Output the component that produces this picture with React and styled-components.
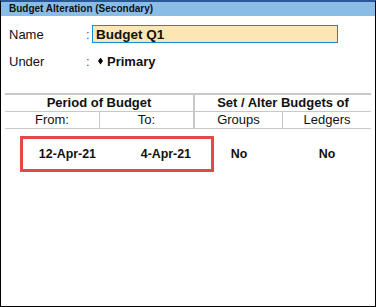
import React from "react";
import styled, { createGlobalStyle } from "styled-components";

const GlobalStyle = createGlobalStyle`
  html, body {
    margin: 0;
    padding: 0;
    background: #ffffff;
  }
  body {
    font-family: "Liberation Sans", Arial, sans-serif;
    color: #000;
  }
`;

const Frame = styled.div`
  box-sizing: border-box;
  width: 376px;
  height: 307px;
  border: 1px solid #000;
  border-top: 2px solid #2b5797;
  display: flex;
  flex-direction: column;
`;

const TitleBar = styled.div`
  height: 14px;
  line-height: 14px;
  background: #8abde6;
  padding-left: 8px;
  font-size: 10px;
  font-weight: bold;
  color: #111;
`;

const Form = styled.div`
  display: flex;
  flex-direction: column;
  gap: 9px;
  padding: 9px 0 0 8px;
`;

const FieldRow = styled.div`
  display: grid;
  grid-template-columns: 77px 6px auto;
  align-items: center;
  height: 18px;
  font-size: 13px;
`;

const Label = styled.span`
  color: #111;
`;

const Colon = styled.span`
  color: #555;
`;

const NameInput = styled.div`
  box-sizing: border-box;
  width: 246px;
  height: 18px;
  border: 1px solid #1a8ad4;
  background: #fde6b3;
  padding-left: 3px;
  font-size: 13.5px;
  font-weight: bold;
  line-height: 17px;
  color: #111;
`;

const Value = styled.span`
  display: flex;
  align-items: center;
  gap: 4px;
  padding-left: 6px;
  font-weight: bold;
  color: #111;
`;

const Diamond = styled.span`
  width: 5px;
  height: 7px;
  background: #000;
  clip-path: polygon(50% 0, 100% 50%, 50% 100%, 0 50%);
`;

const Table = styled.div`
  margin: 23px 4px 0 4px;
  border-top: 2px solid #c8c8c8;
`;

const HeadRow = styled.div`
  display: grid;
  grid-template-columns: ${(p) => p.$cols};
  border-bottom: 1px solid #c8c8c8;
  height: 16px;
  font-size: 13px;
  line-height: 16px;
`;

const HeadCell = styled.div`
  text-align: center;
  font-weight: ${(p) => (p.$bold ? "bold" : "normal")};
  color: #111;
  border-right: ${(p) => p.$sep || "none"};
`;

const DataRow = styled.div`
  position: relative;
  display: grid;
  grid-template-columns: 95px 95px 88px 88px;
  align-items: center;
  height: 36px;
  margin-top: 7px;
  font-size: 12.4px;
  font-weight: bold;
  color: #111;
`;

const DataCell = styled.div`
  text-align: ${(p) => p.$align || "center"};
  padding-right: ${(p) => (p.$align === "right" ? "4px" : "0")};
`;

const Highlight = styled.div`
  position: absolute;
  left: 15px;
  top: 0;
  width: 194px;
  height: 36px;
  box-sizing: border-box;
  border: 3px solid #e54848;
  pointer-events: none;
`;

export default function App() {
  return (
    <>
      <GlobalStyle />
      <Frame>
        <TitleBar>Budget Alteration (Secondary)</TitleBar>
        <Form>
          <FieldRow>
            <Label>Name</Label>
            <Colon>:</Colon>
            <NameInput>Budget Q1</NameInput>
          </FieldRow>
          <FieldRow>
            <Label>Under</Label>
            <Colon>:</Colon>
            <Value>
              <Diamond />
              Primary
            </Value>
          </FieldRow>
        </Form>
        <Table>
          <HeadRow $cols="190px 176px">
            <HeadCell $bold $sep="2px solid #c8c8c8">Period of Budget</HeadCell>
            <HeadCell $bold>Set / Alter Budgets of</HeadCell>
          </HeadRow>
          <HeadRow $cols="95px 95px 88px 88px">
            <HeadCell $sep="1px solid #c8c8c8">From:</HeadCell>
            <HeadCell $sep="2px solid #c8c8c8">To:</HeadCell>
            <HeadCell $sep="1px solid #c8c8c8">Groups</HeadCell>
            <HeadCell>Ledgers</HeadCell>
          </HeadRow>
          <DataRow>
            <DataCell $align="right">12-Apr-21</DataCell>
            <DataCell $align="right">4-Apr-21</DataCell>
            <DataCell>No</DataCell>
            <DataCell>No</DataCell>
            <Highlight />
          </DataRow>
        </Table>
      </Frame>
    </>
  );
}
